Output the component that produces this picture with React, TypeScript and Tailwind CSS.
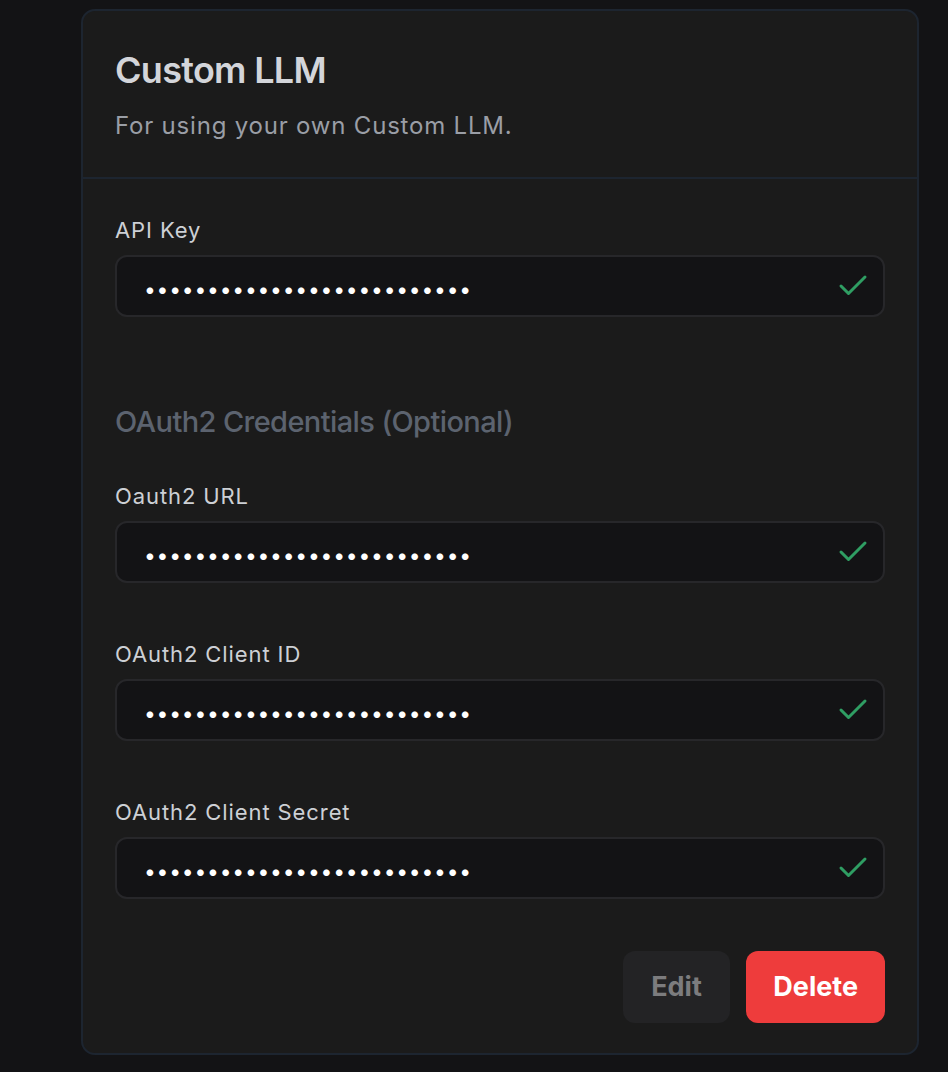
import { Check } from 'lucide-react';

type Field = { label: string; value: string };

// every stored secret is shown as 26 masked chars
const masked = 'abcdefghijklmnopqrstuvwxyz';

const apiField: Field = { label: 'API Key', value: masked };

const oauthFields: Field[] = [
  { label: 'Oauth2 URL', value: masked },
  { label: 'OAuth2 Client ID', value: masked },
  { label: 'OAuth2 Client Secret', value: masked },
];

function SecretField({ field }: { field: Field }) {
  return (
    <div className="flex flex-col">
      <label className="mb-[11px] text-[22px] leading-[28px] tracking-[0.9px] text-[#cdd0d5]">{field.label}</label>
      <div className="relative">
        <input
          type="password"
          readOnly
          value={field.value}
          className="h-[62px] w-full rounded-[12px] border-2 border-[#27272a] bg-[#131315] pl-[27px] pr-[60px] pt-[6px] text-[21px] tracking-[0.8px] text-white outline-none"
        />
        <Check
          size={36}
          strokeWidth={2}
          className="pointer-events-none absolute right-[14px] top-1/2 -translate-y-1/2 text-[#2f9e63]"
        />
      </div>
    </div>
  );
}

export default function App() {
  return (
    <div
      className="min-h-screen bg-[#131315] pl-[81px] pt-[9px]"
      style={{ fontFamily: 'Inter, "Noto Sans", sans-serif' }}
    >
      <div className="w-[838px] rounded-[14px] border-2 border-[#1d2530] bg-[#1b1b1b]">
        {/* header */}
        <div className="border-b-2 border-[#1d2530] px-[32px] pb-[35px] pt-[39px]">
          <h2 className="text-[36px] font-semibold leading-[40px] tracking-[-0.7px] text-[#d3d5da]">Custom LLM</h2>
          <p className="mt-[20px] text-[24px] leading-[32px] tracking-[0.8px] text-[#9a9ea6]">For using your own Custom LLM.</p>
        </div>

        {/* body */}
        <div className="px-[32px] pb-[30px] pt-[37px]">
          <SecretField field={apiField} />

          <h3 className="mt-[87px] text-[29px] font-medium leading-[36px] tracking-[-0.6px] text-[#5c636f]">
            OAuth2 Credentials (Optional)
          </h3>

          <div className="mt-[42px] flex flex-col gap-[57px]">
            {oauthFields.map((f) => (
              <SecretField key={f.label} field={f} />
            ))}
          </div>

          <div className="mt-[52px] flex justify-end gap-4">
            <button className="h-[72px] rounded-[12px] bg-[#232325] px-[28.5px] text-[27px] font-bold text-[#7c7c7e]">
              Edit
            </button>
            <button className="h-[72px] rounded-[12px] bg-[#ee3c3c] px-[27px] text-[27px] font-bold text-white">
              Delete
            </button>
          </div>
        </div>
      </div>
    </div>
  );
}
